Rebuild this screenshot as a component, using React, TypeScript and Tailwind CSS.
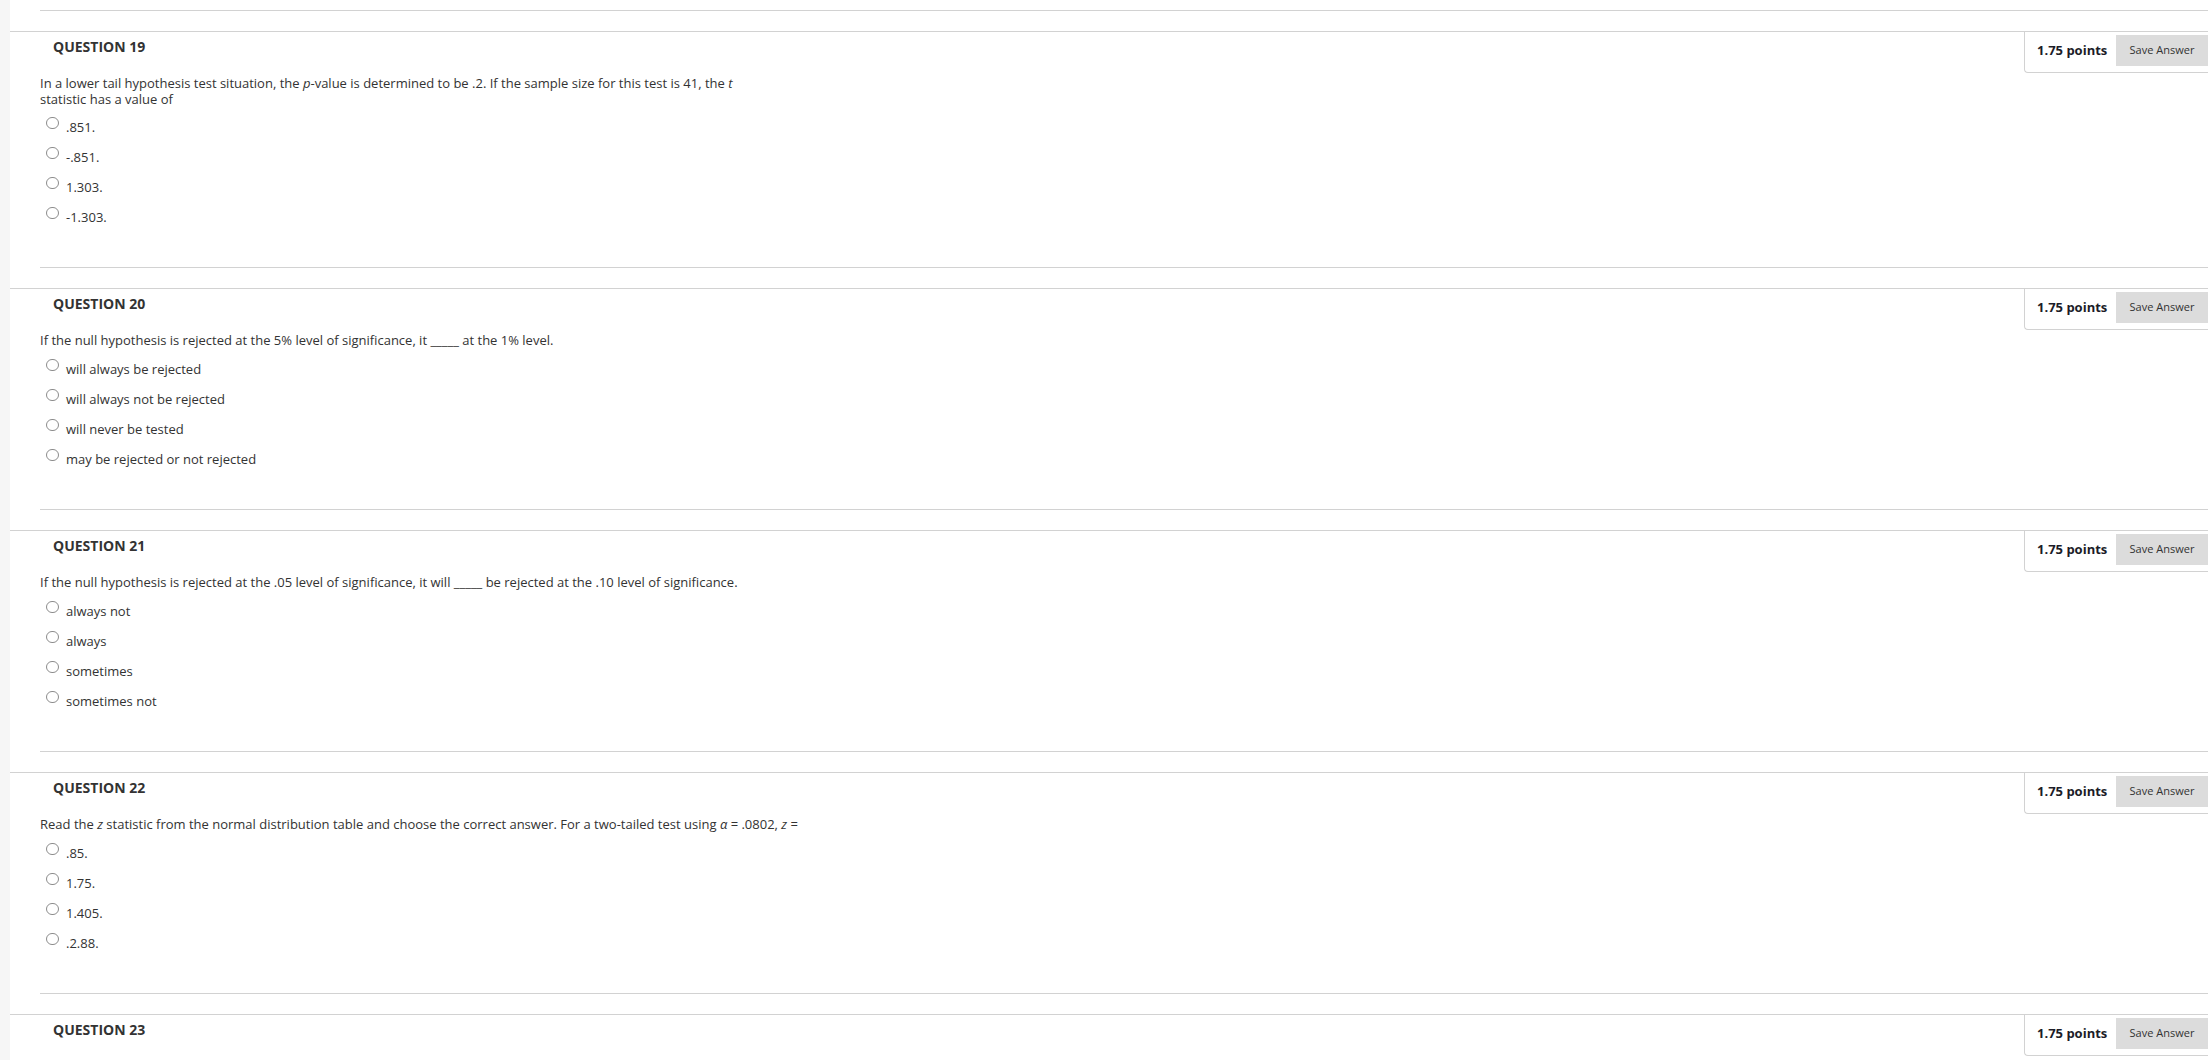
import React from "react";

type Question = {
  n: number;
  text?: React.ReactNode;
  options?: string[];
  tight?: boolean;
};

const questions: Question[] = [
  {
    n: 19,
    text: (
      <>
        In a lower tail hypothesis test situation, the <i>p</i>-value is determined to be .2. If the sample size for this test is 41, the <i>t</i>
        <br />
        statistic has a value of
      </>
    ),
    options: [".851.", "-.851.", "1.303.", "-1.303."],
    tight: true,
  },
  {
    n: 20,
    text: <>If the null hypothesis is rejected at the 5% level of significance, it _____ at the 1% level.</>,
    options: ["will always be rejected", "will always not be rejected", "will never be tested", "may be rejected or not rejected"],
  },
  {
    n: 21,
    text: <>If the null hypothesis is rejected at the .05 level of significance, it will _____ be rejected at the .10 level of significance.</>,
    options: ["always not", "always", "sometimes", "sometimes not"],
  },
  {
    n: 22,
    text: (
      <>
        Read the <i>z</i> statistic from the normal distribution table and choose the correct answer. For a two-tailed test using <i>α</i> = .0802, <i>z</i> =
      </>
    ),
    options: [".85.", "1.75.", "1.405.", ".2.88."],
  },
  { n: 23 },
];

function PointsBox() {
  return (
    <div className="absolute right-0 top-0 flex w-[184px] items-center rounded-bl-[4px] border-b border-l border-[#d2d2d2] bg-white pb-[6px] pl-[12px] pt-[3px]">
      <span className="text-[13px] font-bold text-[#1c1c28]">1.75 points</span>
      <div className="ml-auto flex h-[31px] w-[92px] items-center justify-center bg-[#dcdcdc] text-[11px] text-[#333]">
        Save Answer
      </div>
    </div>
  );
}

function QuestionBlock({ q }: { q: Question }) {
  return (
    <section className="relative border-t border-[#d2d2d2]">
      <PointsBox />
      <h2 className="pl-[43px] pt-[5px] text-[14px] font-bold leading-[20px] text-[#333]">QUESTION {q.n}</h2>
      {q.options && (
        <>
          <div className="ml-[30px] border-b border-[#d2d2d2] pb-[32px]">
            <p className="mt-[18px] text-[13px] leading-[16px] text-[#333]">{q.text}</p>
            <ul className={q.tight ? "mt-[8px]" : "mt-[9px]"}>
              {q.options.map((o) => (
                <li key={o} className="flex h-[30px] items-start pl-[6px]">
                  <span className="mt-[2px] h-[12px] w-[13px] shrink-0 rounded-full border border-[#8c8c8c] bg-white" />
                  <span className="ml-[7px] pt-[4px] text-[13px] leading-[16px] text-[#333]">{o}</span>
                </li>
              ))}
            </ul>
          </div>
          <div className="h-[20px]" />
        </>
      )}
    </section>
  );
}

export default function App() {
  return (
    <div className="min-h-screen bg-[#f6f6f6] pl-[10px] font-['Open_Sans',sans-serif]">
      <div className="min-h-screen bg-white">
        <div className="ml-[30px] h-[11px] border-b border-[#d2d2d2]" />
        <div className="h-[20px]" />
        {questions.map((q) => (
          <QuestionBlock key={q.n} q={q} />
        ))}
      </div>
    </div>
  );
}
